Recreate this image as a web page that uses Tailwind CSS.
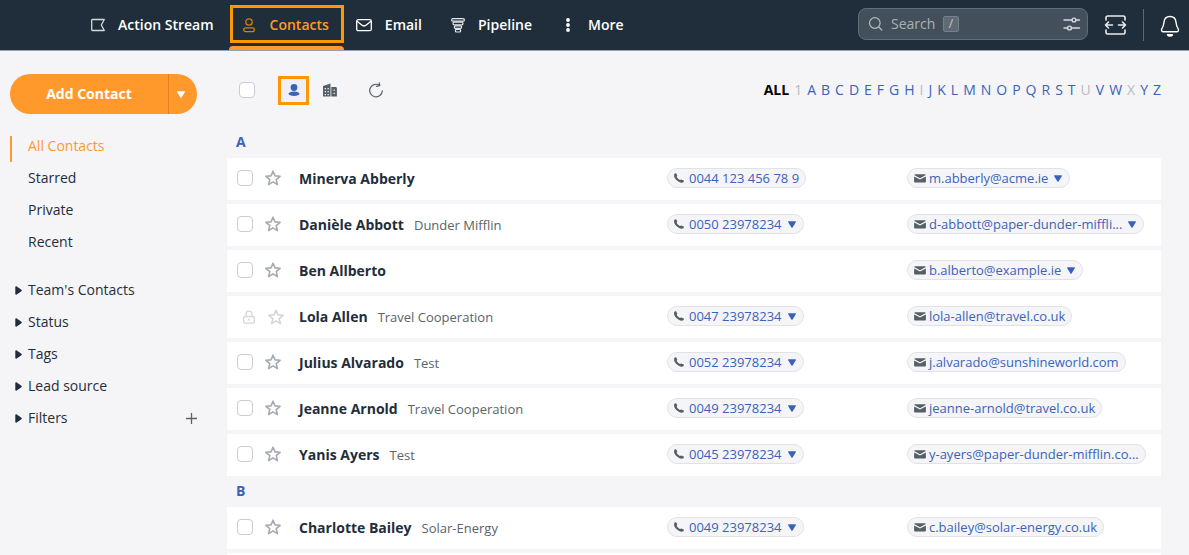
<!DOCTYPE html>
<html lang="en">
<head>
  <meta charset="UTF-8" />
  <meta name="viewport" content="width=device-width, initial-scale=1.0" />
  <title>Contacts</title>
  <script src="https://cdn.jsdelivr.net/npm/@tailwindcss/browser@4"></script>
</head>
<body class="h-screen overflow-hidden bg-[#f5f5f8] font-['Open_Sans',sans-serif] text-sm text-[#1f2e3a]">

  <!-- icons used in the contact rows -->
  <svg class="hidden">
    <symbol id="star" viewBox="0 0 16 16"><path d="M8 1.2l2 4.7 5.1.4-3.9 3.3 1.2 5L8 11.9l-4.4 2.7 1.2-5L.9 6.3 6 5.9z" fill="none" stroke="currentColor" stroke-width="1.6" stroke-linejoin="round"/></symbol>
    <symbol id="lock" viewBox="0 0 14 16"><path d="M4 7.500V5.200a3 3 0 0 1 6 0V7.500M3 7.500h8a1.300 1.300 0 0 1 1.300 1.300v4A1.300 1.300 0 0 1 11 14.100H3a1.300 1.300 0 0 1-1.300-1.300v-4A1.300 1.300 0 0 1 3 7.500z" fill="none" stroke="currentColor" stroke-width="1.300"/><circle cx="7" cy="10.800" r="1" fill="currentColor"/></symbol>
    <symbol id="phone" viewBox="0 0 10 10"><path d="M.1 1.500C.4.700 1.300.1 2.100.3l1.200 2.100c.1.600-.6.900-.6 1.300.4 1.200 1.800 2.600 3.200 3.200.5.100.8-.6 1.400-.5l2.400 1.100c.5.400.2 1.400-.4 1.800-1.100.7-3 .4-4.600-.6C2.300 7.400.4 5.200.1 3.300z" fill="currentColor"/></symbol>
    <symbol id="mail" viewBox="0 0 12 9"><path d="M1.300.3h9.400c.6 0 1 .3 1.100.8L6 4.200.2 1.100C.3.600.7.3 1.300.3zM.1 2.400L6 5.500l5.900-3.100v5c0 .7-.5 1.200-1.200 1.200H1.300C.6 8.600.1 8.100.1 7.400z" fill="currentColor"/></symbol>
    <symbol id="caret" viewBox="0 0 8 7"><path d="M.6.3h6.800c.5 0 .7.5.4.9L4.600 6.400c-.3.500-.9.500-1.200 0L.2 1.200C-.1.800.1.300.6.300z" fill="currentColor"/></symbol>
    <symbol id="arrow" viewBox="0 0 7 9"><path d="M.3.900c0-.7.600-.9 1.100-.6l5 3.400c.5.400.5 1.200 0 1.600l-5 3.400c-.5.300-1.100.1-1.100-.6z" fill="currentColor"/></symbol>
  </svg>

  <header class="flex h-[51px] items-stretch border-b border-[#9aa1ab] bg-[#1f2e3a] pr-[9px] pl-[77px] text-white">
    <nav class="flex items-stretch font-semibold">
      <a href="#" class="mr-px flex items-center gap-[13px] px-3.5">
        <svg class="h-3.5 w-3.5" viewBox="0 0 14 14" fill="none" stroke="#d5d9de" stroke-width="1.300" stroke-linejoin="round"><path d="M1.500 1.500h11.800L10.300 7l3 5.500H1.500a.8.8 0 0 1-.8-.8V2.300a.8.8 0 0 1 .8-.8z"/></svg>
        Action Stream
      </a>
      <a href="#" class="relative flex items-center gap-[13px] pr-[15px] pl-3.5 text-[#ff992b]">
        <svg class="h-4 w-3.5" viewBox="0 0 14 16" fill="none" stroke="#c98213" stroke-width="1.300"><circle cx="6" cy="5" r="3.200"/><rect x=".7" y="10.800" width="10.600" height="3.800" rx="1.900"/></svg>
        Contacts
        <span class="absolute top-[5px] right-0 bottom-[7px] left-px border-3 border-[#ff9800]"></span>
        <span class="absolute right-0 bottom-0 left-0 h-1 rounded-t-sm bg-[#ff992b]"></span>
      </a>
      <a href="#" class="flex items-center gap-[13px] pr-[15px] pl-3">
        <svg class="h-3.5 w-4" viewBox="0 0 16 14" fill="none" stroke="#fff" stroke-width="1.300"><rect x=".7" y="1.700" width="14.600" height="11" rx="1.500"/><path d="M1 3.200l5.400 4.200c1 .7 2.200.7 3.200 0L15 3.200"/></svg>
        Email
      </a>
      <a href="#" class="flex items-center gap-[13px] pr-[15px] pl-3.5">
        <svg class="h-4 w-3.5" viewBox="0 0 14 16" fill="none" stroke="#e3e6e9" stroke-width="1.200"><rect x=".6" y="1.600" width="12.800" height="2.600" rx="1.300"/><rect x="2" y="5.200" width="10" height="2.600" rx="1.300"/><rect x="3.300" y="8.800" width="7.400" height="2.600" rx="1.300"/><rect x="4.300" y="12.400" width="5.400" height="2.600" rx="1.300"/></svg>
        Pipeline
      </a>
      <a href="#" class="flex items-center gap-[13px] px-3.5">
        <svg class="h-4 w-3.5" viewBox="0 0 14 16" fill="#fff"><circle cx="7" cy="3" r="1.900"/><circle cx="7" cy="8" r="1.900"/><circle cx="7" cy="13" r="1.900"/></svg>
        More
      </a>
    </nav>

    <div class="ml-auto flex items-center">
      <div class="relative mb-0.5 flex h-8 w-[230px] items-center rounded-lg border border-[#5f6d77] bg-[#43505b] px-[9px]">
        <svg class="h-4 w-4" viewBox="0 0 16 16" fill="none" stroke="#b3b9be" stroke-width="1.200" stroke-linecap="round"><circle cx="6.800" cy="7" r="5.300"/><path d="M10.800 11l3 3"/></svg>
        <input type="text" aria-label="Search" placeholder="Search" class="ml-[7px] w-[52px] bg-transparent placeholder-[#a9b0b6] outline-none" />
        <kbd class="flex h-4 w-4 items-center justify-center rounded-xs border border-[#75818a] bg-[#5f6b74] font-['Open_Sans',sans-serif] text-xs text-[#c3c8cc]">/</kbd>
        <button aria-label="Search options" class="ml-auto -mr-[3px]">
          <svg class="h-4 w-[18px]" viewBox="0 0 18 16" fill="none" stroke="#d9dcdf" stroke-width="1.400" stroke-linecap="round"><path d="M1 4h8M13 4h3.500M1 12h3.500M8.500 12h8"/><circle cx="11" cy="4" r="1.900"/><circle cx="6.500" cy="12" r="1.900"/></svg>
        </button>
      </div>
      <button aria-label="Expand" class="mx-4">
        <svg class="h-[22px] w-[23px]" viewBox="0 0 23 22" fill="none" stroke="#e8eaed" stroke-width="1.600" stroke-linecap="round" stroke-linejoin="round"><path d="M2 6V3.700C2 2.500 2.700 2 3.700 2h15.600c1 0 1.700.5 1.700 1.700V6M2 16v2.300c0 1.200.7 1.700 1.700 1.700h15.600c1 0 1.700-.5 1.700-1.700V16"/><path d="M8.500 11h-7M4.500 8l-3 3 3 3M14.500 11h7M18.500 8l3 3-3 3"/></svg>
      </button>
      <span class="h-8 w-px bg-[#5b6871]"></span>
      <button aria-label="Notifications" class="ml-4">
        <svg class="h-6 w-5" viewBox="0 0 20 24" fill="none" stroke="#fff" stroke-width="1.400" stroke-linecap="round" stroke-linejoin="round"><path d="M10 3.500c3.500 0 5.700 2.400 6 5.700.3 2.800.7 4.300 2.100 6.400 1 1.700.1 3.200-1.700 3.200H3.600c-1.800 0-2.700-1.500-1.700-3.200C3.300 13.500 3.700 12 4 9.200c.3-3.300 2.500-5.700 6-5.700z"/><path d="M7.500 21.800c1 1.600 4 1.600 5 0z" fill="#fff"/></svg>
      </button>
    </div>
  </header>

  <div class="flex">
    <aside class="w-[227px] shrink-0 pt-[23px] pr-[30px] pl-2.5 font-medium">
      <div class="flex h-10 overflow-hidden rounded-full bg-[#ff992b] text-white">
        <button class="flex-1 font-bold">Add Contact</button>
        <button aria-label="More add options" class="flex w-[29px] items-center border-l border-[#e8801c] pl-2">
          <svg class="h-[7px] w-2"><use href="#caret"/></svg>
        </button>
      </div>

      <nav class="mt-4 flex flex-col">
        <a href="#" class="relative flex h-8 items-center pl-[18px] text-[#ff992b]">
          <span class="absolute bottom-0 left-0 h-[26px] w-0.5 bg-[#ff992b]"></span>All Contacts
        </a>
        <a href="#" class="flex h-8 items-center pl-[18px]">Starred</a>
        <a href="#" class="flex h-8 items-center pl-[18px]">Private</a>
        <a href="#" class="flex h-8 items-center pl-[18px]">Recent</a>
      </nav>

      <div class="mt-4 flex flex-col">
        <button class="flex h-8 items-center gap-1.5 pl-[5px]"><svg class="h-[9px] w-[7px]"><use href="#arrow"/></svg>Team's Contacts</button>
        <button class="flex h-8 items-center gap-1.5 pl-[5px]"><svg class="h-[9px] w-[7px]"><use href="#arrow"/></svg>Status</button>
        <button class="flex h-8 items-center gap-1.5 pl-[5px]"><svg class="h-[9px] w-[7px]"><use href="#arrow"/></svg>Tags</button>
        <button class="flex h-8 items-center gap-1.5 pl-[5px]"><svg class="h-[9px] w-[7px]"><use href="#arrow"/></svg>Lead source</button>
        <div class="flex h-8 items-center justify-between">
          <button class="flex items-center gap-1.5 pl-[5px]"><svg class="h-[9px] w-[7px]"><use href="#arrow"/></svg>Filters</button>
          <button aria-label="Add filter"><svg class="h-[11px] w-[11px]" viewBox="0 0 11 11" stroke="#5a646b" stroke-width="1.300"><path d="M5.500 0v11M0 5.500h11"/></svg></button>
        </div>
      </div>
    </aside>

    <main class="min-w-0 flex-1 pr-7">
      <div class="mb-0.5 flex h-[78px] items-center pl-3">
        <input type="checkbox" aria-label="Select all" class="h-4 w-4 appearance-none rounded-sm border border-[#c9ccd6] bg-white" />
        <button aria-label="People" class="ml-[23px] flex h-[29px] w-[31px] items-center justify-center border-3 border-[#ff9800] bg-[#eff0f5]">
          <svg class="h-3 w-3" viewBox="0 0 12 12" fill="#3a63b8"><circle cx="6" cy="3.500" r="3.400"/><ellipse cx="6" cy="9.800" rx="5.500" ry="2.200"/></svg>
        </button>
        <button aria-label="Companies" class="ml-3.5">
          <svg class="h-3.5 w-3.5" viewBox="0 0 14 14" fill="#555f66"><path fill-rule="evenodd" d="M0 3L7.500.5V13.500H0zM1.700 5v1.200H3V5zm2.800 0v1.200h1.300V5zM1.700 8v1.200H3V8zm2.800 0v1.200h1.300V8zm-2.800 3v1.200H3V11zm2.800 0v1.200h1.300V11zM8.300 4h4.200c.8 0 1.400.6 1.400 1.300v8.200H8.300zM10.500 6.500v1.300h1.300V6.500zm0 3.200V11h1.300V9.700z"/></svg>
        </button>
        <button aria-label="Refresh" class="ml-8">
          <svg class="h-4 w-3.5" viewBox="0 0 14 16" fill="none" stroke="#555f66" stroke-width="1.200" stroke-linecap="round"><path d="M10.300 3.200A6.300 6.300 0 1 0 13.300 8.800M7.500 4.300l3.300-.7L10.200.8"/></svg>
        </button>
        <nav id="letters" class="ml-auto flex gap-[5px] text-[#3a63b8]">
          <a href="#" class="font-bold text-black">ALL</a>
        </nav>
      </div>

      <table id="contacts" class="w-full table-fixed border-separate border-spacing-0 text-left">
        <colgroup>
          <col class="w-[72px]" />
          <col />
          <col class="w-60" />
          <col class="w-[254px]" />
        </colgroup>
      </table>
    </main>
  </div>

  <script>
    const groups = [
      { letter: 'A', rows: [
        { name: 'Minerva Abberly', phone: '0044 123 456 78 9', email: 'm.abberly@acme.ie', moreEmails: true },
        { name: 'Danièle Abbott', company: 'Dunder Mifflin', phone: '0050 23978234', morePhones: true, email: 'd-abbott@paper-dunder-miffli...', moreEmails: true },
        { name: 'Ben Allberto', email: 'b.alberto@example.ie', moreEmails: true },
        { name: 'Lola Allen', company: 'Travel Cooperation', phone: '0047 23978234', morePhones: true, email: 'lola-allen@travel.co.uk', locked: true },
        { name: 'Julius Alvarado', company: 'Test', phone: '0052 23978234', morePhones: true, email: 'j.alvarado@sunshineworld.com' },
        { name: 'Jeanne Arnold', company: 'Travel Cooperation', phone: '0049 23978234', morePhones: true, email: 'jeanne-arnold@travel.co.uk' },
        { name: 'Yanis Ayers', company: 'Test', phone: '0045 23978234', morePhones: true, email: 'y-ayers@paper-dunder-mifflin.co...' },
      ]},
      { letter: 'B', rows: [
        { name: 'Charlotte Bailey', company: 'Solar-Energy', phone: '0049 23978234', morePhones: true, email: 'c.bailey@solar-energy.co.uk' },
      ]},
    ];

    // letters without any contact are greyed out
    const emptyLetters = '1IUX';

    document.getElementById('letters').innerHTML += [...'1ABCDEFGHIJKLMNOPQRSTUVWXYZ'].map(l =>
      emptyLetters.includes(l) ? `<span class="text-[#b9bbbf]">${l}</span>` : `<a href="#">${l}</a>`
    ).join('');

    function pill(icon, text, more) {
      if (!text) return '';
      const svg = icon === 'phone'
        ? '<svg class="mr-[5px] h-2.5 w-2.5 text-[#555f66]"><use href="#phone"/></svg>'
        : '<svg class="mr-[3px] h-[9px] w-3 text-[#555f66]"><use href="#mail"/></svg>';
      const caret = more ? '<button aria-label="Show more" class="mr-px ml-1.5 flex"><svg class="h-[7px] w-2"><use href="#caret"/></svg></button>' : '';
      return `<span class="inline-flex h-5 items-center rounded-full border border-[#dfe3e8] bg-[#f5f5f8] px-1.5 align-top text-[13px] whitespace-nowrap text-[#3a63b8]">${svg}<a href="#">${text}</a>${caret}</span>`;
    }

    function row(c) {
      const select = c.locked
        ? '<div class="flex items-center gap-3 pt-0.5 pl-[15px] text-[#d3d5d8]"><svg class="h-4 w-3.5"><use href="#lock"/></svg><svg class="h-4 w-4"><use href="#star"/></svg></div>'
        : `<div class="flex items-center gap-3 pl-2.5"><input type="checkbox" aria-label="Select ${c.name}" class="h-4 w-4 appearance-none rounded-sm border border-[#c9ccd6] bg-white" /><button aria-label="Star ${c.name}" class="text-[#a4aab0]"><svg class="h-4 w-4"><use href="#star"/></svg></button></div>`;
      return `
        <tr class="h-[46px] bg-white">
          <td class="border-b-4 border-[#f5f5f8] pb-0.5">${select}</td>
          <td class="border-b-4 border-[#f5f5f8]"><a href="#" class="font-bold">${c.name}</a><span class="ml-2.5 text-[13px] text-[#5a646b]">${c.company || ''}</span></td>
          <td class="border-b-4 border-[#f5f5f8] pb-0.5">${pill('phone', c.phone, c.morePhones)}</td>
          <td class="border-b-4 border-[#f5f5f8] pb-0.5">${pill('mail', c.email, c.moreEmails)}</td>
        </tr>`;
    }

    document.getElementById('contacts').innerHTML += groups.map(g => `
      <tbody>
        <tr class="h-[27px]"><th colspan="4" class="pb-1.5 pl-[9px] font-bold text-[#3a63b8]">${g.letter}</th></tr>
        ${g.rows.map(row).join('')}
      </tbody>`).join('') + '<tbody><tr class="h-[46px] bg-white"><td colspan="4"></td></tr></tbody>';
  </script>
</body>
</html>
